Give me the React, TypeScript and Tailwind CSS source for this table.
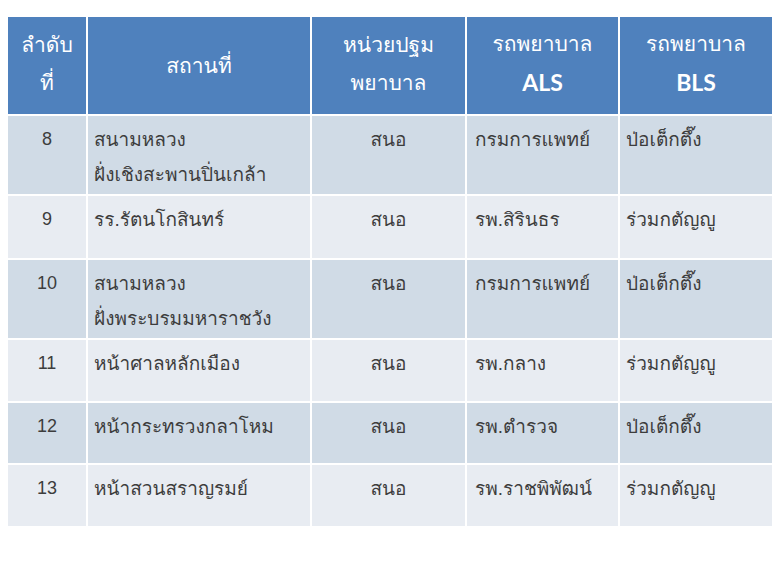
const rows = [
  { no: "8", place: ["สนามหลวง", "ฝั่งเชิงสะพานปิ่นเกล้า"], unit: "สนอ", als: "กรมการแพทย์", bls: "ป่อเต็กตึ๊ง", h: "h-[80px]", dark: true },
  { no: "9", place: ["รร.รัตนโกสินทร์"], unit: "สนอ", als: "รพ.สิรินธร", bls: "ร่วมกตัญญู", h: "h-[64px]", dark: false },
  { no: "10", place: ["สนามหลวง", "ฝั่งพระบรมมหาราชวัง"], unit: "สนอ", als: "กรมการแพทย์", bls: "ป่อเต็กตึ๊ง", h: "h-[80px]", dark: true },
  { no: "11", place: ["หน้าศาลหลักเมือง"], unit: "สนอ", als: "รพ.กลาง", bls: "ร่วมกตัญญู", h: "h-[63px]", dark: false },
  { no: "12", place: ["หน้ากระทรวงกลาโหม"], unit: "สนอ", als: "รพ.ตำรวจ", bls: "ป่อเต็กตึ๊ง", h: "h-[62px]", dark: true },
  { no: "13", place: ["หน้าสวนสราญรมย์"], unit: "สนอ", als: "รพ.ราชพิพัฒน์", bls: "ร่วมกตัญญู", h: "h-[63px]", dark: false },
];

const thai = '"Liberation Sans", Loma, Garuda, Tahoma, "Noto Sans Thai", "Noto Sans", sans-serif';

export default function App() {
  return (
    <div className="w-[780px] h-[585px] bg-white pt-[15px] pl-[6px]" style={{ fontFamily: thai }}>
      <table className="border-collapse table-fixed w-[766px]">
        <colgroup>
          <col className="w-[80px]" />
          <col className="w-[224px]" />
          <col className="w-[155px]" />
          <col className="w-[153px]" />
          <col className="w-[154px]" />
        </colgroup>
        <thead>
          <tr className="h-[99px] bg-[#4f81bd] text-white text-[21px]">
            <th className="border-2 border-white font-normal leading-[38px] align-middle pb-[4px]">
              ลำดับ
              <br />
              ที่
            </th>
            <th className="border-2 border-white font-normal align-middle">สถานที่</th>
            <th className="border-2 border-white font-normal leading-[38px] align-middle pb-[4px]">
              หน่วยปฐม
              <br />
              พยาบาล
            </th>
            <th className="border-2 border-white font-normal leading-[38px] align-middle pb-[4px]">
              รถพยาบาล
              <br />
              <span className="font-bold text-[23px] font-['Lato',sans-serif]">ALS</span>
            </th>
            <th className="border-2 border-white font-normal leading-[38px] align-middle pb-[4px]">
              รถพยาบาล
              <br />
              <span className="font-bold text-[23px] font-['Lato',sans-serif]">BLS</span>
            </th>
          </tr>
        </thead>
        <tbody className="text-[#3d3d3d] text-[19px]">
          {rows.map((r) => (
            <tr key={r.no} className={`${r.h} ${r.dark ? "bg-[#d0dbe6]" : "bg-[#e8ecf2]"}`}>
              <td className="border-2 border-white align-top text-center text-[18px] pt-[6px] leading-[35px]">{r.no}</td>
              <td className="border-2 border-white align-top pl-[6px] pt-[6px] leading-[35px]">
                {r.place.map((p) => (
                  <div key={p}>{p}</div>
                ))}
              </td>
              <td className="border-2 border-white align-top text-center pt-[6px] leading-[35px]">{r.unit}</td>
              <td className="border-2 border-white align-top pl-[8px] pt-[6px] leading-[35px]">{r.als}</td>
              <td className="border-2 border-white align-top pl-[6px] pt-[6px] leading-[35px]">{r.bls}</td>
            </tr>
          ))}
        </tbody>
      </table>
    </div>
  );
}
